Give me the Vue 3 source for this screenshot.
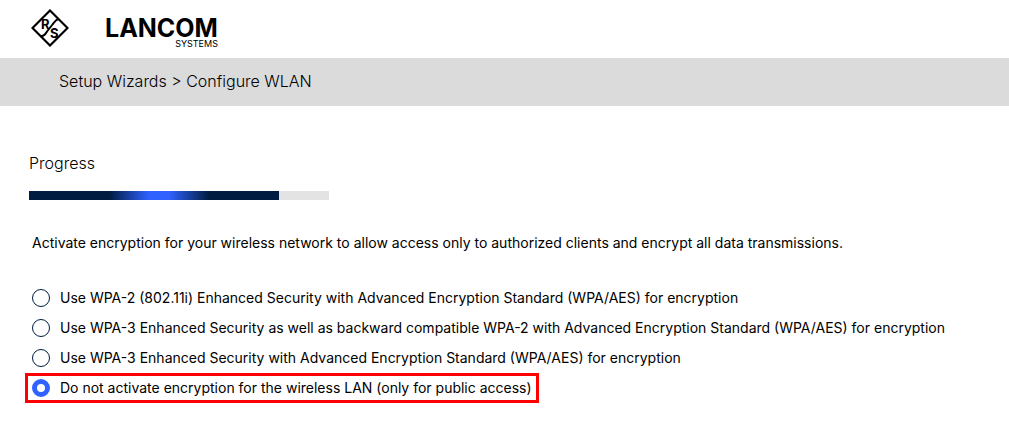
<template>
  <div class="wizard">
    <header class="brand">
      <svg class="brand-mark" viewBox="0 0 38 38" aria-hidden="true">
        <path d="M19 1.5 L36.5 19 L19 36.5 L1.5 19 Z" fill="none" stroke="#000" stroke-width="2.2" />
        <path
          d="M28 10 C24.5 10.5 23.5 13 21.5 15.5 L16 22.5 C14.5 25 13.5 27 10 27.5"
          fill="none"
          stroke="#000"
          stroke-width="2"
        />
        <text x="10" y="20" class="mark-letter">R</text>
        <text x="19" y="29" class="mark-letter">S</text>
      </svg>
      <div class="brand-name">
        <span class="brand-title">LANCOM</span>
        <span class="brand-sub">SYSTEMS</span>
      </div>
    </header>

    <nav class="breadcrumb">Setup Wizards &gt; Configure WLAN</nav>

    <main class="content">
      <h2 id="progress-label">Progress</h2>
      <div
        class="progress"
        role="progressbar"
        aria-labelledby="progress-label"
        aria-valuemin="0"
        aria-valuemax="300"
        :aria-valuenow="progress"
      >
        <div class="progress-fill" :style="{ width: (progress / 300) * 100 + '%' }"></div>
      </div>

      <p id="question" class="description">
        Activate encryption for your wireless network to allow access only to authorized clients and encrypt all data transmissions.
      </p>

      <form class="options" role="radiogroup" aria-labelledby="question">
        <label
          v-for="option in options"
          :key="option.value"
          class="option"
          :class="{ highlighted: option.value === 'none' }"
        >
          <input v-model="encryption" type="radio" name="encryption" :value="option.value">
          <span>{{ option.label }}</span>
        </label>
      </form>
    </main>
  </div>
</template>

<script setup>
import { ref } from 'vue'

const progress = ref(250)
const encryption = ref('none')

const options = [
  { value: 'wpa2', label: 'Use WPA-2 (802.11i) Enhanced Security with Advanced Encryption Standard (WPA/AES) for encryption' },
  { value: 'wpa2-3', label: 'Use WPA-3 Enhanced Security as well as backward compatible WPA-2 with Advanced Encryption Standard (WPA/AES) for encryption' },
  { value: 'wpa3', label: 'Use WPA-3 Enhanced Security with Advanced Encryption Standard (WPA/AES) for encryption' },
  { value: 'none', label: 'Do not activate encryption for the wireless LAN (only for public access)' }
]
</script>

<style>
body {
  background-color: #fff;
}
</style>

<style scoped>
.wizard {
  font-family: Inter, "Liberation Sans", sans-serif;
  font-size: 14px;
  color: #000;
}

.brand {
  display: flex;
  align-items: flex-start;
  gap: 36px;
  height: 49px;
  padding: 9px 31px 0;
}

.brand-mark {
  width: 38px;
  height: 38px;
}

.mark-letter {
  font-size: 13px;
  font-weight: 700;
}

.brand-name {
  display: flex;
  flex-direction: column;
  align-items: flex-end;
  padding-top: 7px;
}

.brand-title {
  font-size: 25px;
  font-weight: 700;
  line-height: 24px;
}

.brand-sub {
  font-size: 9px;
  line-height: 8px;
}

.breadcrumb {
  padding: 0 59px 2px;
  background-color: #dbdbdb;
  font-size: 16px;
  font-weight: 300;
  line-height: 46px;
}

.content {
  padding: 47px 25px 16px;
}

h2 {
  margin: 0 4px;
  font-size: 16px;
  font-weight: 300;
  line-height: 20px;
}

.progress {
  max-width: 300px;
  height: 9px;
  margin: 18px 4px 0;
  background-color: #e3e3e3;
}

.progress-fill {
  height: 100%;
  background: linear-gradient(90deg, #001c41 32%, #2f62ff 48%, #2f62ff 56%, #001c41 72%);
}

.description {
  margin: 33px 7px 0;
  line-height: 20px;
}

.options {
  display: flex;
  flex-direction: column;
  align-items: flex-start;
  margin-top: 30px;
}

.option {
  display: flex;
  align-items: center;
  gap: 10px;
  box-sizing: border-box;
  min-height: 30px;
  padding: 0 4px;
  border: 3px solid transparent;
  line-height: 20px;
  cursor: pointer;
}

.option.highlighted {
  border-color: #f00;
}

.option input {
  appearance: none;
  flex: none;
  width: 18px;
  height: 18px;
  margin: 0;
  border: 1px solid #001c41;
  border-radius: 50%;
  background-color: #fff;
  cursor: pointer;
}

.option input:checked {
  border: 5px solid #2f62ff;
}
</style>
